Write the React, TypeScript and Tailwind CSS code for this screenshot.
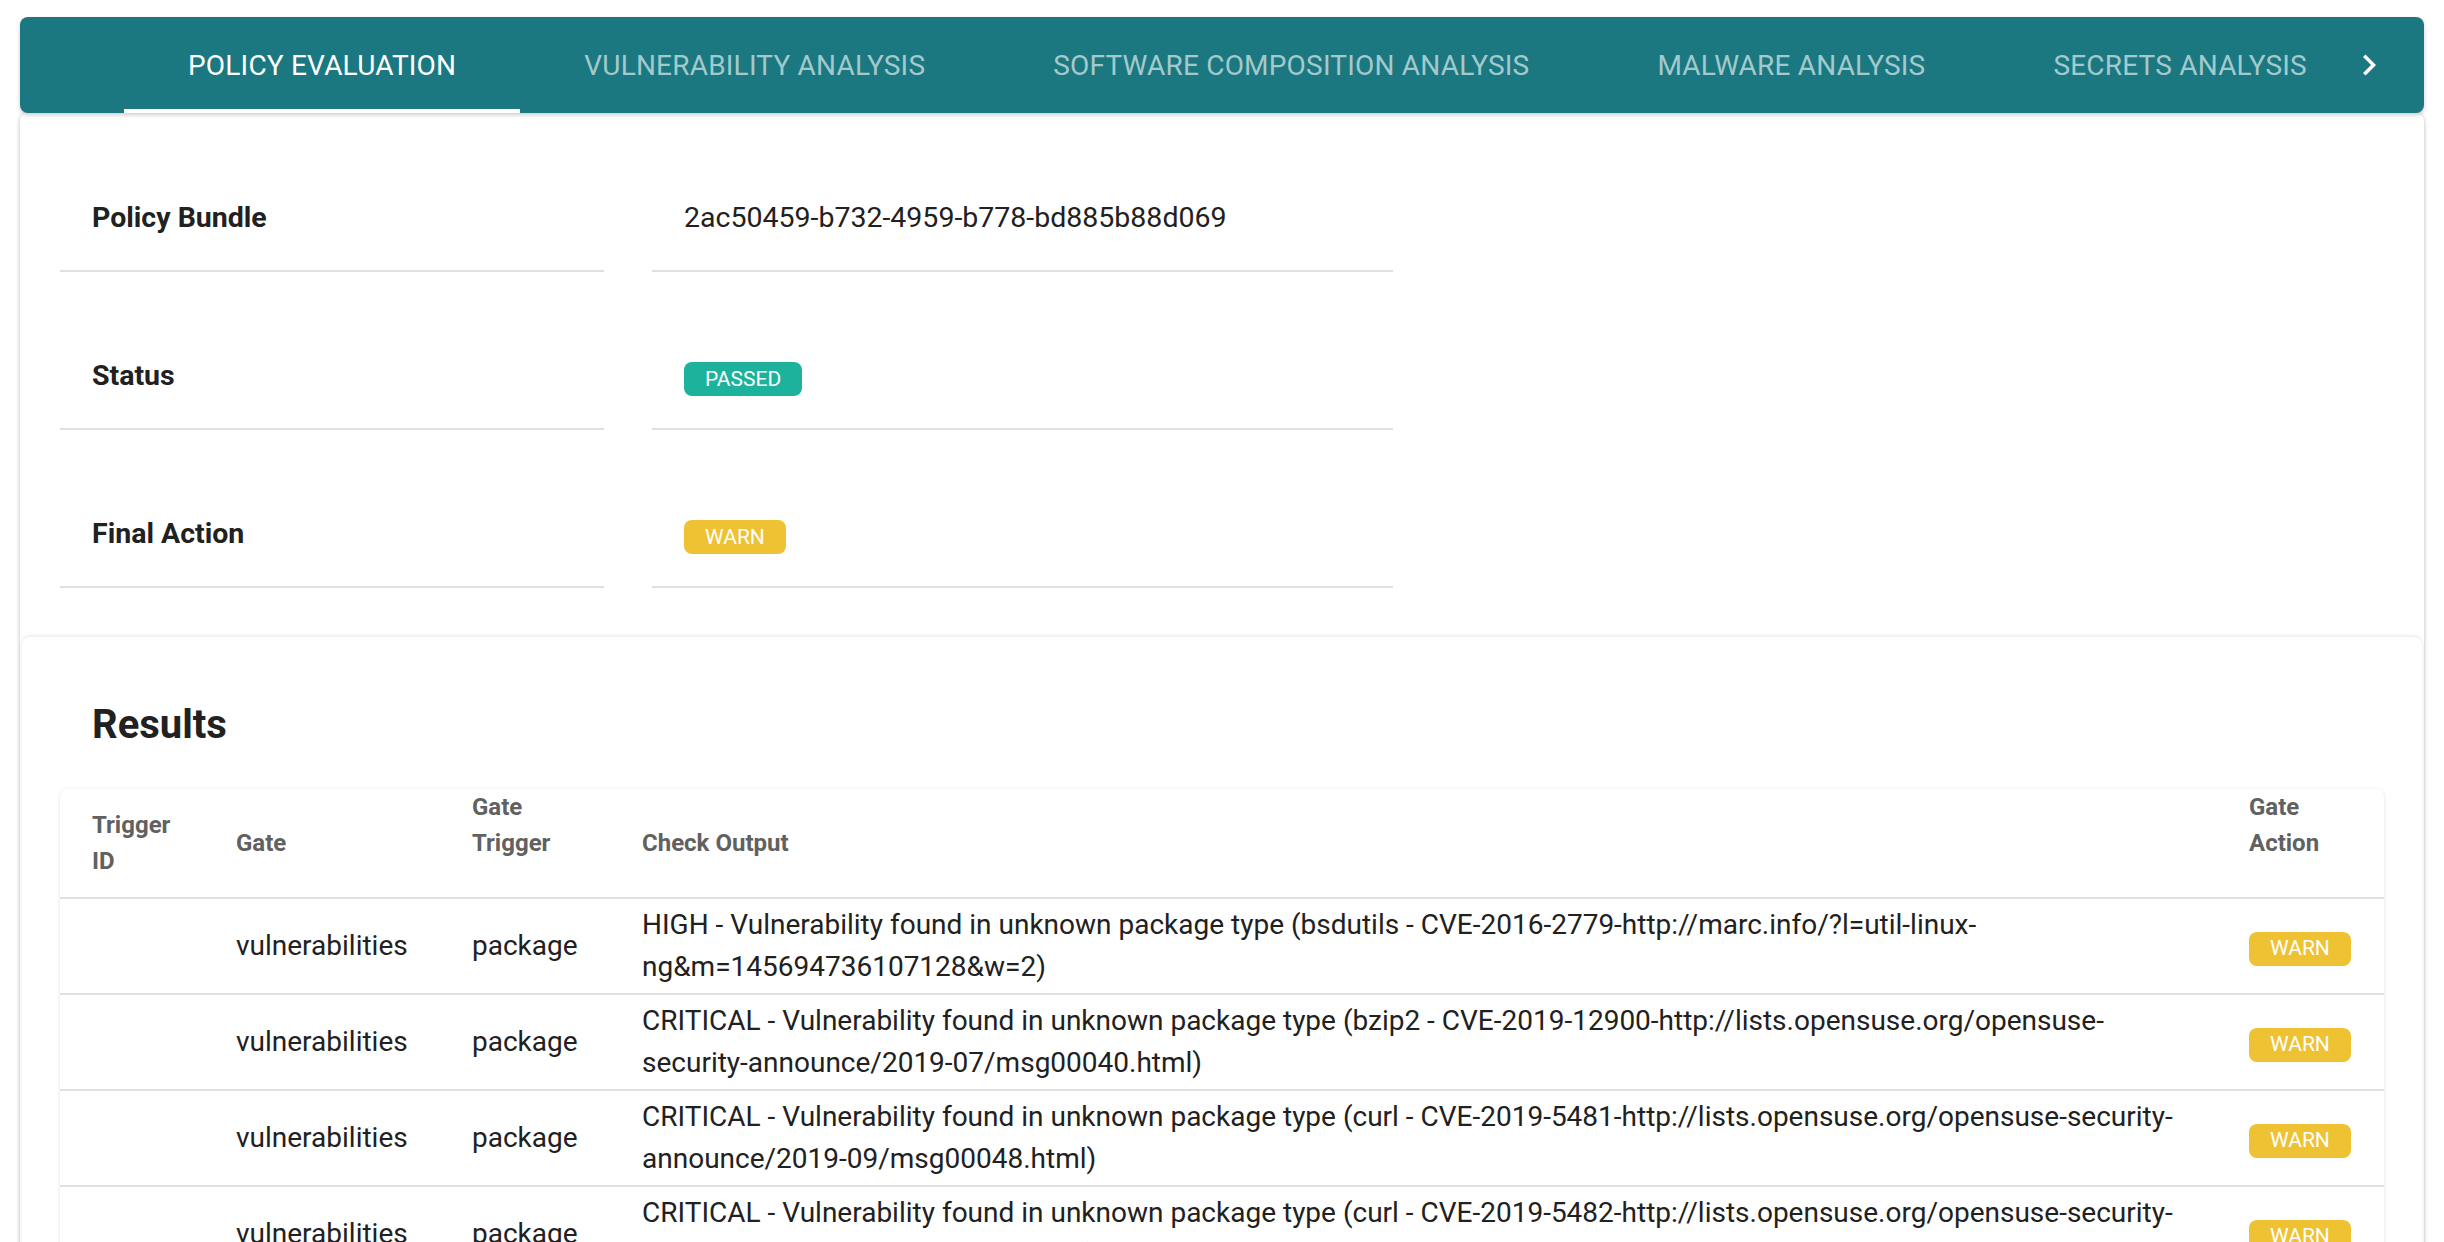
const tabs = [
  "POLICY EVALUATION",
  "VULNERABILITY ANALYSIS",
  "SOFTWARE COMPOSITION ANALYSIS",
  "MALWARE ANALYSIS",
  "SECRETS ANALYSIS",
];

const results = [
  "HIGH - Vulnerability found in unknown package type (bsdutils - CVE-2016-2779-http://marc.info/?l=util-linux-ng&m=145694736107128&w=2)",
  "CRITICAL - Vulnerability found in unknown package type (bzip2 - CVE-2019-12900-http://lists.opensuse.org/opensuse-security-announce/2019-07/msg00040.html)",
  "CRITICAL - Vulnerability found in unknown package type (curl - CVE-2019-5481-http://lists.opensuse.org/opensuse-security-announce/2019-09/msg00048.html)",
  "CRITICAL - Vulnerability found in unknown package type (curl - CVE-2019-5482-http://lists.opensuse.org/opensuse-security-announce/2019-09/msg00048.html)",
  "HIGH - Vulnerability found in unknown package type (curl - CVE-2019-5436-http://lists.opensuse.org/opensuse-security-announce/2019-06/msg00003.html)",
];

function Chip({ label, tone }: { label: string; tone: "pass" | "warn" }) {
  const color = tone === "pass" ? "bg-[#1db29b]" : "bg-[#eec232]";
  return (
    <span className={`inline-flex items-center h-[34px] px-[21px] rounded-[8px] text-white text-[21px] leading-none ${color}`}>
      {label}
    </span>
  );
}

function InfoRow({ label, children }: { label: string; children: React.ReactNode }) {
  return (
    <div className="flex gap-[48px]">
      <div className="w-[544px] p-[32px] border-b-2 border-[#e0e0e0]">
        <div className="h-[40px] leading-[40px] text-[28.5px] font-bold text-[#212121]">{label}</div>
      </div>
      <div className="w-[741px] p-[32px] border-b-2 border-[#e0e0e0]">
        <div className="h-[40px] leading-[40px] text-[28.5px] text-[#212121] flex items-end">{children}</div>
      </div>
    </div>
  );
}

export default function App() {
  return (
    <div className="h-screen overflow-hidden bg-white pt-[17px] px-[20px] font-['Roboto',sans-serif]">
      {/* Tab bar */}
      <div className="h-[96px] rounded-[8px] bg-[#1b7880] shadow-[0_2px_4px_rgba(0,0,0,0.2)] flex relative z-10">
        <div className="w-[104px] shrink-0" />
        <div className="flex-1 flex overflow-hidden">
          {tabs.map((t, i) => (
            <div
              key={t}
              className={`relative shrink-0 h-[96px] px-[64px] pt-[1px] flex items-center text-[28px] tracking-[0.2px] whitespace-nowrap ${
                i === 0 ? "text-white" : "text-[#a4c9cc]"
              }`}
            >
              {t}
              {i === 0 && <span className="absolute left-0 right-0 bottom-0 h-[4px] bg-white" />}
            </div>
          ))}
        </div>
        <div className="w-[76px] shrink-0 flex items-center">
          <svg width="42" height="42" viewBox="0 0 24 24" fill="white">
            <path d="M8.59 16.59 13.17 12 8.59 7.41 10 6l6 6-6 6z" />
          </svg>
        </div>
      </div>

      {/* Main panel */}
      <div className="rounded-[8px] bg-white shadow-[0_1px_4px_rgba(0,0,0,0.28)] pb-[40px]">
        <div className="pl-[40px] pt-[53px] flex flex-col gap-[52px]">
          <InfoRow label="Policy Bundle">2ac50459-b732-4959-b778-bd885b88d069</InfoRow>
          <InfoRow label="Status">
            <Chip label="PASSED" tone="pass" />
          </InfoRow>
          <InfoRow label="Final Action">
            <Chip label="WARN" tone="warn" />
          </InfoRow>
        </div>

        {/* Results */}
        <div className="mt-[49px] mx-[2px] rounded-[8px] bg-white shadow-[0_-1px_4px_rgba(0,0,0,0.1)] px-[38px] pt-[64px] pb-[40px]">
          <h2 className="pl-[32px] text-[40px] leading-[48px] font-bold text-[#212121]">Results</h2>
          <div className="mt-[40px] rounded-t-[8px] shadow-[0_1px_4px_rgba(0,0,0,0.12)] overflow-hidden">
            <table className="w-full table-fixed border-collapse text-left">
              <colgroup>
                <col className="w-[144px]" />
                <col className="w-[236px]" />
                <col className="w-[170px]" />
                <col />
                <col className="w-[167px]" />
              </colgroup>
              <thead>
                <tr className="h-[108px] border-b-2 border-[#e0e0e0] text-[24px] leading-[36px] font-bold text-[#616161]">
                  <th className="px-[32px] py-0 align-middle font-bold">Trigger ID</th>
                  <th className="px-[32px] py-0 align-middle font-bold">Gate</th>
                  <th className="px-[32px] pt-0 pb-[36px] align-middle font-bold">Gate Trigger</th>
                  <th className="px-[32px] py-0 align-middle font-bold">Check Output</th>
                  <th className="px-[32px] pt-0 pb-[36px] align-middle font-bold">Gate Action</th>
                </tr>
              </thead>
              <tbody className="text-[28px] leading-[42px] text-[#212121]">
                {results.map((r, i) => (
                  <tr key={i} className="border-b-2 border-[#e0e0e0]">
                    <td className="px-[32px] py-[5px] align-middle" />
                    <td className="pl-[32px] pr-0 py-[5px] align-middle whitespace-nowrap">vulnerabilities</td>
                    <td className="px-[32px] py-[5px] align-middle">package</td>
                    <td className="px-[32px] py-[5px] align-middle">{r}</td>
                    <td className="px-[32px] py-[5px] align-middle">
                      <Chip label="WARN" tone="warn" />
                    </td>
                  </tr>
                ))}
              </tbody>
            </table>
          </div>
        </div>
      </div>
    </div>
  );
}
